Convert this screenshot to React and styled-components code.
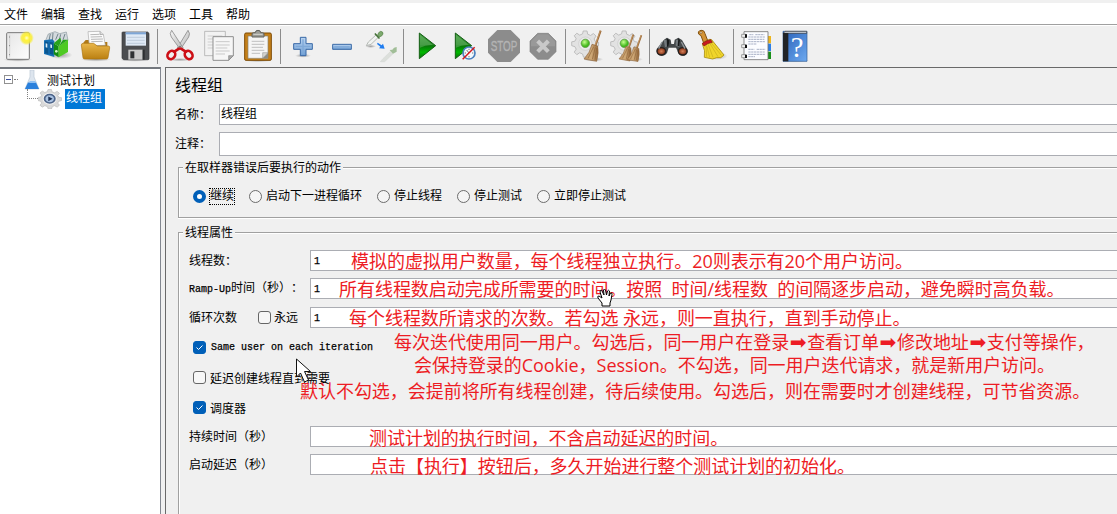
import React from 'react';
import styled, { createGlobalStyle } from 'styled-components';

const GlobalStyle = createGlobalStyle`
  * {
    box-sizing: border-box;
  }
  body {
    margin: 0;
    overflow: hidden;
    background: #f0f0f0;
  }
`;

const Window = styled.div`
  position: relative;
  display: flex;
  flex-direction: column;
  width: 1117px;
  height: 514px;
  overflow: hidden;
  background: #f0f0f0;
  color: #000;
  font-family: 'Liberation Mono', 'Noto Sans CJK SC', monospace;
  font-size: 12px;
  white-space: pre;
  text-spacing-trim: space-all;
  cursor: default;
`;

const MenuBar = styled.nav`
  display: flex;
  gap: 13px;
  height: 22px;
  margin-top: 3px;
  padding-left: 4px;
  line-height: 21px;
  background: #fff;
  border-bottom: 1px solid #a0a0a0;
  font-family: 'Noto Sans CJK SC', sans-serif;
`;

const ToolBar = styled.div`
  display: flex;
  align-items: center;
  gap: 7px;
  height: 42px;
  padding: 0 0 0 2px;
  border-top: 1px solid #fff;
`;

const Separator = styled.div`
  width: 1px;
  height: 35px;
  margin: 0 -1px;
  background: #8c8c8c;
`;

const IconSvg = styled.svg`
  display: block;
  flex: none;
  width: 32px;
  height: 32px;
  margin-top: -1px;
  overflow: visible;
`;

const Workspace = styled.div`
  display: flex;
  flex: 1;
  gap: 4px;
  min-height: 0;
`;

const Tree = styled.div`
  flex: none;
  width: 161px;
  padding-top: 1px;
  background: #fff;
  border-top: 2px solid #73777d;
  border-right: 1px solid #828790;
`;

const TreeRow = styled.div`
  display: flex;
  align-items: center;
  height: ${({ $child }) => ($child ? 20 : 19)}px;
  padding-left: ${({ $child }) => ($child ? 27 : 4)}px;
`;

const Expander = styled.div`
  display: flex;
  align-items: center;
  width: 9px;
  height: 9px;
  padding: 0 1px;
  border: 1px solid #919191;
  background: #fff;

  &::before {
    content: '';
    width: 5px;
    height: 1px;
    background: #3a4ea0;
  }
`;

const Dots = styled.div`
  width: ${({ $width }) => $width}px;
  border-top: 1px dotted #808080;
  margin-left: ${({ $left }) => $left || 0}px;
`;

const Elbow = styled.div`
  width: 11px;
  height: 10px;
  margin-bottom: 10px;
  border-left: 1px dotted #808080;
  border-bottom: 1px dotted #808080;
`;

const FlaskSvg = styled.svg`
  width: 16px;
  height: 20px;
  margin: 0 7px 0 6px;
`;

const NodeGearSvg = styled.svg`
  width: 24px;
  height: 20px;
  margin: 0 3px 0 0;
`;

const Selected = styled.span`
  width: 40px;
  height: 20px;
  padding-left: 1px;
  line-height: 21px;
  background: #0078d7;
  color: #fff;
`;

const Panel = styled.main`
  flex: 1;
  min-width: 0;
  padding-left: 9px;
  border-top: 1px solid #696969;
  border-left: 1px solid #696969;
`;

const Title = styled.h1`
  height: 36px;
  margin: 0;
  line-height: 39px;
  font-size: 16px;
  font-weight: 400;
`;

const Row = styled.div`
  display: flex;
  align-items: center;
  height: ${({ $height }) => $height || 21}px;
  margin-top: ${({ $top }) => $top || 0}px;
  padding-left: ${({ $indent }) => $indent || 0}px;
`;

const Label = styled.label`
  flex: none;
  width: ${({ $width }) => $width}px;
  padding-top: 2px;
  line-height: 18px;
`;

const Latin = styled.span`
  font-size: 10px;
  -webkit-text-stroke: 0.25px #000;
`;

const Field = styled.div`
  flex: 1;
  align-self: stretch;
  padding-left: ${({ $pad }) => $pad || 1}px;
  line-height: 20px;
  background: #fff;
  border: 1px solid #abadb3;
  border-right: 0;
`;

const Group = styled.section`
  height: ${({ $height }) => $height}px;
  margin: ${({ $top }) => $top}px 0 0 3px;
  border: 1px solid #a0a0a0;
  border-right: 0;
  box-shadow: inset 1px 1px #fff, 0 1px #fff;
`;

const Legend = styled.div`
  width: fit-content;
  height: 18px;
  margin: -9px 0 0 4px;
  padding: 0 2px;
  line-height: 21px;
  background: #f0f0f0;
`;

const RadioRow = styled.div`
  display: flex;
  gap: 15px;
  margin: 10px 0 0 14px;
`;

const Choice = styled.div`
  display: flex;
  align-items: center;
  height: ${({ $height }) => $height || 19}px;
  margin-top: ${({ $top }) => $top || 0}px;
  margin-left: ${({ $left }) => $left || 0}px;
`;

const RadioDot = styled.span`
  width: 13px;
  height: 13px;
  margin-right: 4px;
  border: ${({ $on }) => ($on ? '4px solid #005fb8' : '1px solid #6c6c6c')};
  border-radius: 50%;
  background: ${({ $on }) => ($on ? '#fff' : '#f5f5f5')};
`;

const ChoiceText = styled.span`
  height: 15px;
  line-height: 17px;
  outline: ${({ $focus }) => ($focus ? '1px dotted #000' : 'none')};
  outline-offset: ${({ $focus }) => ($focus ? '-0.5px' : 0)};
`;

const Box = styled.span`
  display: flex;
  width: 13px;
  height: 13px;
  margin-right: ${({ $gap }) => $gap || 4}px;
  border: 1px solid ${({ $on }) => ($on ? '#005fb8' : '#666')};
  border-radius: 3px;
  background: ${({ $on }) => ($on ? '#005fb8' : '#f7f7f7')};
`;

// Notes are written over the form, wherever there is room for them.
const Note = styled.p`
  position: absolute;
  left: ${({ $x }) => $x}px;
  top: ${({ $y }) => $y - 13}px;
  margin: 0;
  height: 26px;
  line-height: 26px;
  color: #ed1c24;
  font-family: 'Open Sans', 'Noto Sans CJK SC', sans-serif;
  font-size: 18px;
  letter-spacing: -0.04px;
`;

const NoteArrow = styled.span`
  display: inline-block;
  width: 18px;
  text-align: center;
  font-family: 'DejaVu Sans', sans-serif;
  font-size: 20px;
  line-height: 20px;
`;

const Pointer = styled.svg`
  position: absolute;
  left: ${({ $x }) => $x}px;
  top: ${({ $y }) => $y}px;
`;

const GEAR =
  'M34 2h12l2 10 9 4 9-6 8 8-6 9 4 8 10 2v11l-10 3-4 8 6 9-8 8-9-6-8 4-3 10H35l-3-10-9-4-9 6-8-8 6-9-4-8-10-3V36l10-2 4-8-6-9 8-8 9 6 9-4z';

const Defs = () => (
  <svg width="0" height="0" style={{ position: 'absolute' }}>
    <defs>
      <linearGradient id="paper" x1="0" y1="0" x2="1" y2="1">
        <stop offset="0" stopColor="#e6e6e6" />
        <stop offset="1" stopColor="#fdfdfd" />
      </linearGradient>
      <linearGradient id="green" x1="0" y1="0" x2="0" y2="1">
        <stop offset="0" stopColor="#3d9a3a" />
        <stop offset=".45" stopColor="#1c801c" />
        <stop offset=".5" stopColor="#087808" />
        <stop offset=".75" stopColor="#00b800" />
        <stop offset="1" stopColor="#087008" />
      </linearGradient>
      <linearGradient id="folder" x1="0" y1="0" x2="0" y2="1">
        <stop offset="0" stopColor="#e9b64a" />
        <stop offset="1" stopColor="#bb8011" />
      </linearGradient>
      <linearGradient id="steel" x1="0" y1="0" x2="1" y2="1">
        <stop offset="0" stopColor="#f7f7f7" />
        <stop offset="1" stopColor="#b5b5b5" />
      </linearGradient>
      <linearGradient id="blue" x1="0" y1="0" x2="0" y2="1">
        <stop offset="0" stopColor="#bcd6f2" />
        <stop offset="1" stopColor="#6d9dd3" />
      </linearGradient>
      <linearGradient id="cover" x1="0" y1="0" x2="1" y2="1">
        <stop offset="0" stopColor="#2860b8" />
        <stop offset="1" stopColor="#6eaaf0" />
      </linearGradient>
      <linearGradient id="straw" x1="0" y1="0" x2="1" y2="0">
        <stop offset="0" stopColor="#b98e5c" />
        <stop offset=".5" stopColor="#d0aa78" />
        <stop offset="1" stopColor="#94683b" />
      </linearGradient>
      <radialGradient id="glow">
        <stop offset="0" stopColor="#ffffd0" />
        <stop offset=".35" stopColor="#fff23a" />
        <stop offset=".7" stopColor="#f8ec30" stopOpacity=".8" />
        <stop offset="1" stopColor="#f8ee60" stopOpacity="0" />
      </radialGradient>
      <radialGradient id="lime" cx=".4" cy=".35">
        <stop offset="0" stopColor="#c8ff90" />
        <stop offset="1" stopColor="#42b81c" />
      </radialGradient>
      <radialGradient id="shade">
        <stop offset="0" stopColor="#000" stopOpacity=".35" />
        <stop offset="1" stopColor="#000" stopOpacity="0" />
      </radialGradient>
      <radialGradient id="lens">
        <stop offset="0" stopColor="#d9825a" />
        <stop offset="1" stopColor="#7b2d12" />
      </radialGradient>
    </defs>
  </svg>
);

const Icon = ({ children }) => <IconSvg viewBox="0 0 96 96">{children}</IconSvg>;

const NewIcon = () => (
  <Icon>
    <ellipse cx="48" cy="89" rx="44" ry="6" fill="url(#shade)" />
    <rect x="14" y="8" width="68" height="80" rx="3" fill="url(#paper)" stroke="#777" strokeWidth="3" />
    <path d="M23 14v68" stroke="#bbb" strokeWidth="1.5" />
    <path d="M21 21h3M21 47h3M21 74h3" stroke="#888" strokeWidth="3" />
    <circle cx="74" cy="24" r="22" fill="url(#glow)" />
  </Icon>
);

const TemplatesIcon = () => (
  <Icon>
    <ellipse cx="58" cy="75" rx="36" ry="12" fill="url(#shade)" />
    <path d="M14 31L22 12l20-7 14 6 20-5 5 25-22 15z" fill="#d4dade" stroke="#8b989e" strokeWidth="2" />
    <path d="M24 32l4-20M34 34l2-25M44 29l7-17M54 33l5-20M66 29l6-17" stroke="#73838b" strokeWidth="3" />
    <path d="M9 31l24-3 7 5v48L9 72z" fill="#1670b5" />
    <path d="M12 34l10 2v36l-10-2zM26 36l10 1v37l-10-3z" fill="#0b568f" />
    <path d="M14 40l5 1v12l-5-1zM28 43l5 1v10l-5-1z" fill="#d7edfb" />
    <path d="M38 40l15 9v33l-15-9z" fill="#138b13" />
    <path d="M53 49l28-20v37L53 82z" fill="#4fca23" />
    <path d="M38 40l20-17 3 10-8 16zM53 49l13-20 15 0z" fill="#27a41b" />
    <circle cx="46" cy="64" r="4" fill="#d4f8c7" />
  </Icon>
);

const OpenIcon = () => (
  <Icon>
    <ellipse cx="48" cy="88" rx="45" ry="7" fill="url(#shade)" />
    <path d="M10 38l7-8h24l5 6h36v30H10z" fill="#b07a18" />
    <path d="M24 5l36-1 10 9 6 33-48 1z" fill="#fbfbfb" stroke="#aaa" strokeWidth="2" />
    <path d="M31 14l27-1M32 21l34-1M33 28l36-1M34 35l34-1" stroke="#aaa" strokeWidth="2.5" />
    <path d="M60 4v10l10-1" fill="#ddd" stroke="#999" strokeWidth="2" />
    <path d="M4 45q0-5 6-5h31l11 8h33q5 0 4 6l-5 29q-1 4-5 4H14q-5 0-5-4z" fill="url(#folder)" stroke="#aa7410" strokeWidth="2" />
  </Icon>
);

const SaveIcon = () => (
  <Icon>
    <ellipse cx="48" cy="90" rx="46" ry="5" fill="url(#shade)" />
    <path d="M9 8q0-2 3-2h74l4 4v76q0 3-3 3H14l-5-4z" fill="#4b4d50" stroke="#36383a" strokeWidth="2" />
    <rect x="20" y="7" width="61" height="40" fill="#dfe9f5" />
    <path d="M20 7h61v6H20z" fill="#7ea6d6" />
    <path d="M24 22h53M24 31h53M24 40h53" stroke="#aebdcf" strokeWidth="2" />
    <rect x="28" y="59" width="43" height="30" fill="#c9c9c9" />
    <rect x="34" y="64" width="12" height="21" fill="#303234" />
    <path d="M71 59h6v30h-6z" fill="#2c2e30" />
  </Icon>
);

const CutIcon = () => (
  <Icon>
    <ellipse cx="48" cy="89" rx="34" ry="5" fill="url(#shade)" />
    <path d="M72 1q8 10 2 20L48 60l-8-6z" fill="url(#steel)" stroke="#8b8b8b" strokeWidth="2.5" />
    <path d="M23 1q-8 10-1 20l28 39 7-7z" fill="url(#steel)" stroke="#8b8b8b" strokeWidth="2.5" />
    <circle cx="48" cy="50" r="2.5" fill="#666" />
    <ellipse cx="22" cy="75" rx="11" ry="13" fill="none" stroke="#cc0f16" strokeWidth="8" transform="rotate(35 22 75)" />
    <ellipse cx="74" cy="75" rx="11" ry="13" fill="none" stroke="#cc0f16" strokeWidth="8" transform="rotate(-35 74 75)" />
    <path d="M31 65l14-9M65 65l-14-9" stroke="#cc0f16" strokeWidth="8" strokeLinecap="round" />
  </Icon>
);

const CopyIcon = () => (
  <Icon>
    <path d="M5 4h62v73H5z" fill="#f2f2f2" stroke="#b0b0b0" strokeWidth="2.5" />
    <path d="M14 18h44M14 27h40M14 36h44M14 45h30M14 54h30" stroke="#c9c9c9" strokeWidth="2.5" />
    <path d="M30 20h61v57L77 91H30z" fill="#f6f6f6" stroke="#8f8f8f" strokeWidth="3" />
    <path d="M38 35h42M38 45h42M38 54h35M38 63h42M38 72h28" stroke="#bfbfbf" strokeWidth="2.5" />
    <path d="M91 77L77 91V77z" fill="#aaa" stroke="#888" strokeWidth="2" />
  </Icon>
);

const PasteIcon = () => (
  <Icon>
    <ellipse cx="48" cy="92" rx="46" ry="4" fill="url(#shade)" />
    <rect x="8" y="9" width="80" height="82" rx="4" fill="#c58019" stroke="#7f4c07" strokeWidth="3" />
    <path d="M18 18h60v67H18z" fill="#f5f5f5" stroke="#8a826f" strokeWidth="2" />
    <path d="M29 34h38M29 43h38M29 52h34M29 61h38M29 70h25" stroke="#b6b6b6" strokeWidth="2.5" />
    <path d="M78 68L62 85h16z" fill="#8d8d85" />
    <path d="M78 68H62v17z" fill="#d4d4d0" stroke="#888" strokeWidth="1.5" />
    <path d="M30 21v-9q0-4 5-4h5q0-7 8-7t8 7h5q5 0 5 4v9z" fill="#9a9b96" stroke="#62635e" strokeWidth="3" />
    <path d="M34 13h28" stroke="#d5d5d0" strokeWidth="3" />
  </Icon>
);

const ExpandIcon = () => (
  <Icon>
    <ellipse cx="48" cy="77" rx="24" ry="6" fill="url(#shade)" />
    <path d="M40 22h17v19h19v17H57v19H40V58H20V41h20z" fill="url(#blue)" stroke="#3969a6" strokeWidth="3" />
    <path d="M48 28v43M26 49h44" stroke="#7fa9d8" strokeWidth="4" />
  </Icon>
);

const CollapseIcon = () => (
  <Icon>
    <path d="M20 43h56v15H20z" fill="url(#blue)" stroke="#3969a6" strokeWidth="3" />
    <path d="M25 50.500h46" stroke="#7fa9d8" strokeWidth="4" />
  </Icon>
);

const ToggleIcon = () => (
  <Icon>
    <ellipse cx="17" cy="49" rx="16" ry="5" fill="url(#shade)" />
    <path d="M4 47l6-11 24-22 7 7-23 22z" fill="#f1f3f1" stroke="#a9afa9" strokeWidth="2.500" />
    <path d="M31 12l11 12" stroke="#46723a" strokeWidth="5" strokeLinecap="round" />
    <path d="M38 15q2-9 9-11 8 1 7 8-3 8-12 9z" fill="#7daa6e" stroke="#517d42" strokeWidth="2" />
    <path d="M38 38l12 8 4-5 5 15-17-1 4-5-10-8z" fill="#1e7cf0" />
    <g opacity=".6">
      <path d="M46 95l8-9 23-22 7 7-25 24z" fill="#cfd5ce" stroke="#c6ccc6" strokeWidth="2" />
      <path d="M74 60l10 11 11-6V51q-9 1-13 8z" fill="#6d9d5d" />
    </g>
  </Icon>
);

const StartIcon = () => (
  <Icon>
    <path d="M28 9l49 38-49 39z" fill="url(#green)" stroke="#175f17" strokeWidth="3" />
    <path d="M30 14l39 31q-20-2-39 8z" fill="#9ad498" opacity=".35" />
  </Icon>
);

const StartNoPauseIcon = () => (
  <Icon>
    <path d="M19 9l49 38-49 39z" fill="url(#green)" stroke="#175f17" strokeWidth="3" />
    <path d="M21 14l39 31q-20-2-39 8z" fill="#9ad498" opacity=".35" />
    <circle cx="60" cy="69" r="18" fill="#f3f8fd" stroke="#4b81bf" strokeWidth="5" />
    <path d="M60 56v4M60 78v4M47 69h4M69 69h4M53 60l7 9" stroke="#777" strokeWidth="3" />
    <path d="M77 52L41 88" stroke="#d4161c" strokeWidth="4.500" />
  </Icon>
);

const StopIcon = () => (
  <Icon>
    <path d="M28 0h40l28 28v40L68 96H28L0 68V28z" fill="#8c8c8c" />
    <g transform="translate(48 64) scale(.66 1)">
      <text fill="#b4b4b4" fontFamily="Liberation Sans, sans-serif" fontSize="45" textAnchor="middle" stroke="#b4b4b4">
        STOP
      </text>
    </g>
  </Icon>
);

const ShutdownIcon = () => (
  <Icon>
    <path d="M32 10h32l23 23v32L64 88H32L9 65V33z" fill="#8c8c8c" stroke="#808080" strokeWidth="2" />
    <path d="M12 49V34l21-21h30l21 21v15z" fill="#999" />
    <path d="M32 33l32 32M64 33L32 65" stroke="#c9c9c9" strokeWidth="12" />
  </Icon>
);

const Gear = () => (
  <>
    <g transform="translate(1 1) scale(.96)">
      <path d={GEAR} fill="#e2e2e2" stroke="#b2b2b2" strokeWidth="2.500" />
    </g>
    <circle cx="40" cy="41" r="20" fill="#e9e9e9" stroke="#cacaca" strokeWidth="2" />
    <circle cx="40" cy="40" r="12.500" fill="url(#lime)" stroke="#5b9c42" strokeWidth="2.500" />
  </>
);

const Besom = ({ x, y }) => (
  <g transform={`translate(${x} ${y})`}>
    <path d="M86 2L70 48" stroke="#9c6b3a" strokeWidth="6" />
    <path d="M85 2L69 47" stroke="#d7ac78" strokeWidth="2" />
    <path d="M60 43l17 5q4 19-3 46l-38-7q18-18 24-44z" fill="url(#straw)" stroke="#8e6439" strokeWidth="2" />
    <path d="M65 50L48 85M70 52l-9 36M74 54l-5 35" stroke="#8c6338" strokeWidth="2" />
  </g>
);

const ClearIcon = () => (
  <Icon>
    <ellipse cx="64" cy="88" rx="30" ry="7" fill="url(#shade)" />
    <Gear />
    <Besom x={0} y={0} />
  </Icon>
);

const ClearAllIcon = () => (
  <Icon>
    <ellipse cx="64" cy="88" rx="32" ry="7" fill="url(#shade)" />
    <Gear />
    <g transform="translate(12 13) scale(.86)">
      <Besom x={-22} y={-1} />
      <Besom x={6} y={1} />
    </g>
  </Icon>
);

const SearchIcon = () => (
  <Icon>
    <path d="M24 29l9-6 11 6 2 13h8l2-13 11-6 11 7 17 29q2 14-11 18-13 1-17-9l-7-15H38l-5 16q-5 9-17 8Q-1 73 2 57z" fill="#44484a" />
    <path d="M23 30l13-1 3 18-12 5zM60 29l13 1-3 22-11-5z" fill="#73797d" />
    <path d="M32 25l8 6-2 17-5 3zM67 25l5 5-2 19-5-1z" fill="#17191a" />
    <ellipse cx="16" cy="64" rx="13" ry="11" fill="url(#lens)" stroke="#25201e" strokeWidth="4" />
    <ellipse cx="80" cy="64" rx="13" ry="11" fill="url(#lens)" stroke="#25201e" strokeWidth="4" />
    <path d="M8 56l10-20M87 56L76 36" stroke="#92979a" strokeWidth="4" />
  </Icon>
);

const ResetSearchIcon = () => (
  <Icon>
    <ellipse cx="64" cy="78" rx="34" ry="12" fill="url(#shade)" />
    <path d="M10 6q3-6 11-5 8 1 9 10l9 23-13 5-8-22Q8 13 10 6z" fill="#d49436" stroke="#815212" strokeWidth="3" />
    <circle cx="18" cy="8" r="3" fill="#fff" stroke="#815212" strokeWidth="2" />
    <path d="M25 37l19-9q7-1 9 5l34 42q-8 12-22 8l-12 4-25-5q4-20-6-40z" fill="#f0d52b" stroke="#a88d0d" strokeWidth="2.500" />
    <path d="M33 45l2 35M39 42l15 40M45 41l24 39M48 38l31 38M35 47l9 35" stroke="#c8ae1c" strokeWidth="2" />
    <path d="M22 40q11-9 25-11l5 8q-14 2-25 11z" fill="#c9191e" stroke="#811013" strokeWidth="2" />
  </Icon>
);

const FunctionIcon = () => (
  <Icon>
    <path d="M82 18h11v22H82z" fill="#edb51c" />
    <path d="M82 41h11v22H82z" fill="#2c7fe6" />
    <path d="M82 65h11v22H82z" fill="#178f17" />
    <path d="M12 5h72v84H12z" fill="#fbfcff" stroke="#737373" strokeWidth="2.500" />
    <path d="M28 14h12M46 14h27M25 21h51M25 28h48M25 35h50M25 42h25M25 58h18M50 58h26M25 66h49M25 73h50M25 80h20" stroke="#98a1bb" strokeWidth="2.500" strokeDasharray="7 1.500" />
    <path d="M5 13h13v9H5zM5 44h13v9H5zM5 74h13v9H5z" fill="#f2f2f2" stroke="#777" strokeWidth="2" />
    <path d="M18 13v10M18 44v10M18 74v10" stroke="#111" strokeWidth="6" />
  </Icon>
);

const HelpIcon = () => (
  <Icon>
    <ellipse cx="48" cy="92" rx="44" ry="4" fill="url(#shade)" />
    <path d="M12 4h72v90H12z" fill="url(#cover)" stroke="#315a91" strokeWidth="2" />
    <path d="M13 10l5-6h65v6z" fill="#cad2dc" stroke="#333" strokeWidth="2" />
    <path d="M12 9h16v85H12z" fill="#202327" />
    <text x="54" y="80" fill="#fff" fontFamily="Liberation Serif, serif" fontSize="86" textAnchor="middle">
      ?
    </text>
  </Icon>
);

const TOOLS = [
  [NewIcon, TemplatesIcon, OpenIcon, SaveIcon],
  [CutIcon, CopyIcon, PasteIcon],
  [ExpandIcon, CollapseIcon, ToggleIcon],
  [StartIcon, StartNoPauseIcon, StopIcon, ShutdownIcon],
  [ClearIcon, ClearAllIcon],
  [SearchIcon, ResetSearchIcon],
  [FunctionIcon, HelpIcon],
];

const MENUS = ['文件', '编辑', '查找', '运行', '选项', '工具', '帮助'];

const ACTIONS = ['继续', '启动下一进程循环', '停止线程', '停止测试', '立即停止测试'];

const NOTES = [
  { x: 351, y: 261, text: '模拟的虚拟用户数量，每个线程独立执行。20则表示有20个用户访问。' },
  { x: 339, y: 289, text: '所有线程数启动完成所需要的时间。按照  时间/线程数  的间隔逐步启动，避免瞬时高负载。' },
  { x: 349, y: 318, text: '每个线程数所请求的次数。若勾选 永远，则一直执行，直到手动停止。' },
  { x: 394, y: 342, text: '每次迭代使用同一用户。勾选后，同一用户在登录➡查看订单➡修改地址➡支付等操作，' },
  { x: 414, y: 365, text: '会保持登录的Cookie，Session。不勾选，同一用户迭代请求，就是新用户访问。' },
  { x: 300, y: 391, text: '默认不勾选，会提前将所有线程创建，待后续使用。勾选后，则在需要时才创建线程，可节省资源。' },
  { x: 369, y: 438, text: '测试计划的执行时间，不含启动延迟的时间。' },
  { x: 370, y: 466, text: '点击【执行】按钮后，多久开始进行整个测试计划的初始化。' },
];

const CheckBox = ({ checked, gap }) => (
  <Box $on={checked} $gap={gap}>
    {checked && (
      <svg width="11" height="11" viewBox="0 0 11 11">
        <path d="M2.500 5.500l2 2 4-4" fill="none" stroke="#fff" strokeWidth="1" />
      </svg>
    )}
  </Box>
);

const TestTree = () => (
  <Tree>
    <TreeRow>
      <Expander />
      <Dots $width={4} $left={1} />
      <FlaskSvg viewBox="0 0 16 20">
        <path d="M6 0h4v7l5 12H1L6 7z" fill="#dde5ee" stroke="#bcc8d6" strokeWidth=".7" />
        <path d="M4 12.500h8l3 6.500H1z" fill="#2a80dc" />
        <path d="M5 12l1 1h5l1-1-1-1H6z" fill="#8fc0f2" />
      </FlaskSvg>
      <span>测试计划</span>
    </TreeRow>
    <TreeRow $child>
      <Elbow />
      <NodeGearSvg viewBox="-1 0 84 84" preserveAspectRatio="none">
        <path d={GEAR} fill="#d9d9d9" stroke="#c0c0c0" strokeWidth="3" />
        <circle cx="40" cy="41" r="25" fill="#f0f0f0" />
        <circle cx="40" cy="41" r="18" fill="#a9c2e2" stroke="#4c648a" strokeWidth="6" />
        <path d="M35 31l15 10-15 10z" fill="#1c2f52" />
      </NodeGearSvg>
      <Selected>线程组</Selected>
    </TreeRow>
  </Tree>
);

const NoteText = ({ text }) =>
  text.split('➡').map((part, i) => (
    <React.Fragment key={part}>
      {i > 0 && <NoteArrow>➡</NoteArrow>}
      {part}
    </React.Fragment>
  ));

const ThreadGroupPanel = () => (
  <Panel>
    <Title>线程组</Title>
    <Row>
      <Label $width={44}>名称：</Label>
      <Field>线程组</Field>
    </Row>
    <Row $height={24} $top={7}>
      <Label $width={44}>注释：</Label>
      <Field />
    </Row>
    <Group $top={11} $height={51}>
      <Legend>在取样器错误后要执行的动作</Legend>
      <RadioRow>
        {ACTIONS.map((action, i) => (
          <Choice key={action}>
            <RadioDot $on={i === 0} />
            <ChoiceText $focus={i === 0}>{action}</ChoiceText>
          </Choice>
        ))}
      </RadioRow>
    </Group>
    <Group $top={14} $height={300}>
      <Legend>线程属性</Legend>
      <Row $top={8} $indent={10}>
        <Label $width={121}>线程数：</Label>
        <Field $pad={3}>
          <Latin>1</Latin>
        </Field>
      </Row>
      <Row $top={7} $indent={10}>
        <Label $width={121}>
          <Latin>Ramp-Up</Latin>时间（秒）：
        </Label>
        <Field $pad={3}>
          <Latin>1</Latin>
        </Field>
      </Row>
      <Row $top={8} $indent={10}>
        <Label $width={69}>循环次数</Label>
        <Choice>
          <CheckBox gap={3} />
          <Label $width={36}>永远</Label>
        </Choice>
        <Field $pad={3}>
          <Latin>1</Latin>
        </Field>
      </Row>
      <Choice $height={29} $top={5} $left={14}>
        <CheckBox checked gap={5} />
        <Latin>Same user on each iteration</Latin>
      </Choice>
      <Choice $height={29} $top={1} $left={14}>
        <CheckBox />
        延迟创建线程直到需要
      </Choice>
      <Choice $height={29} $top={1} $left={14}>
        <CheckBox checked />
        调度器
      </Choice>
      <Row $top={4} $indent={10}>
        <Label $width={121}>持续时间（秒）</Label>
        <Field />
      </Row>
      <Row $top={7} $indent={10}>
        <Label $width={121}>启动延迟（秒）</Label>
        <Field />
      </Row>
    </Group>
  </Panel>
);

const App = () => (
  <Window>
    <GlobalStyle />
    <Defs />
    <MenuBar>
      {MENUS.map((menu) => (
        <span key={menu}>{menu}</span>
      ))}
    </MenuBar>
    <ToolBar>
      {TOOLS.map((group, i) => (
        <React.Fragment key={i}>
          {i > 0 && <Separator />}
          {group.map((Tool, j) => (
            <Tool key={j} />
          ))}
        </React.Fragment>
      ))}
    </ToolBar>
    <Workspace>
      <TestTree />
      <ThreadGroupPanel />
    </Workspace>
    <Pointer $x={296} $y={358} width="18" height="26" viewBox="0 0 18 26">
      <path d="M.5 1v18l4-4 4 9 4-2-4-8.500h6z" fill="#fff" stroke="#111" />
    </Pointer>
    {NOTES.map(({ x, y, text }) => (
      <Note key={y} $x={x} $y={y}>
        <NoteText text={text} />
      </Note>
    ))}
    <Pointer $x={597} $y={288} width="17" height="19" viewBox="0 0 17 19">
      <path
        d="M5 18v-3L1 10q-1-2 1-2l3 2-2-6q0-2 1.500-2L7 7 6.500 2q1-2 2 0L9.500 7l1-4q1-1.500 2 0L12 8l1.500-3q2-.5 1.500 1.500L14 12l-1 3v3z"
        fill="#fff"
        stroke="#000"
      />
    </Pointer>
  </Window>
);

export default App;
